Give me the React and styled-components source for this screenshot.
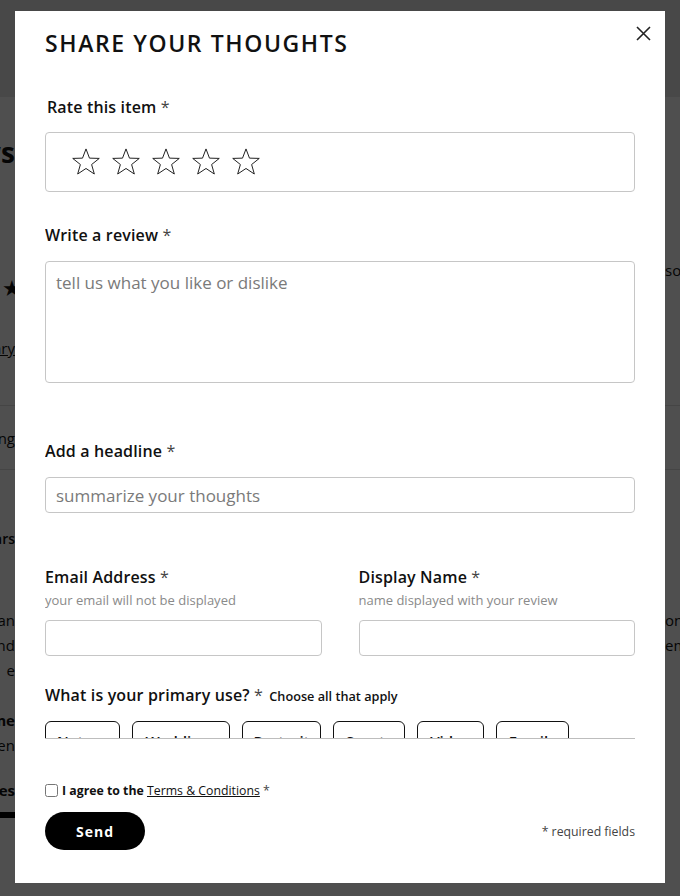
import React from 'react';
import styled, { createGlobalStyle } from 'styled-components';

const GlobalStyle = createGlobalStyle`
  * { box-sizing: border-box; }
  body {
    margin: 0;
    font-family: "Open Sans", "Liberation Sans", sans-serif;
    color: #111;
    background: #fff;
  }
`;

// Page behind the overlay
const Page = styled.div`
  width: 680px;
  height: 896px;
  overflow: hidden;
  display: flex;
  flex-direction: column;
`;

const PageHeader = styled.div`
  height: 97px;
  background: #e8e8e8;
  flex-shrink: 0;
`;

const PageRow = styled.div`
  height: ${(p) => p.$h}px;
  flex-shrink: 0;
  display: flex;
  align-items: center;
  justify-content: space-between;
  white-space: nowrap;
  border-bottom: ${(p) => (p.$line ? '1px solid #ddd' : 'none')};
  font-size: ${(p) => p.$size || 15}px;
  font-weight: ${(p) => p.$weight || 400};
`;

const LeftBit = styled.span`
  display: flex;
  justify-content: flex-end;
  width: ${(p) => p.$w || 15}px;
  line-height: 26px;
  align-self: ${(p) => p.$align || 'center'};
  text-decoration: ${(p) => (p.$underline ? 'underline' : 'none')};
`;

const RightBit = styled.span`
  margin-right: -30px;
  width: 45px;
  font-size: 15px;
  line-height: 30px;
  align-self: ${(p) => p.$align || 'center'};
`;

const Bar = styled.div`
  width: 15px;
  height: 6px;
  background: #000;
`;

// Modal
const Overlay = styled.div`
  position: fixed;
  inset: 0;
  background: rgba(0, 0, 0, 0.69);
  display: flex;
  justify-content: center;
  padding-top: 11px;
`;

const Modal = styled.div`
  position: relative;
  width: 650px;
  height: 872px;
  background: #fff;
  padding: 16px 30px 0;
  display: flex;
  flex-direction: column;
`;

const Title = styled.h2`
  margin: 0;
  font-size: 23px;
  line-height: 32px;
  font-weight: 600;
  letter-spacing: 1.6px;
  color: #111;
  flex-shrink: 0;
`;

const CloseButton = styled.button`
  position: absolute;
  top: 11px;
  right: 11px;
  width: 22px;
  height: 22px;
  padding: 0;
  border: none;
  background: none;
  display: flex;
  align-items: center;
  justify-content: center;
  cursor: pointer;
`;

const Body = styled.div`
  height: 680px;
  overflow: hidden;
  border-bottom: 1px solid #bdbdbd;
  display: flex;
  flex-direction: column;
  flex-shrink: 0;
`;

const Field = styled.div`
  margin-top: ${(p) => p.$mt}px;
  display: flex;
  flex-direction: column;
  flex-shrink: 0;
`;

const Label = styled.label`
  font-size: 16px;
  line-height: 22px;
  font-weight: 600;
  letter-spacing: 0.15px;
  color: #111;
  white-space: nowrap;
  padding-left: ${(p) => (p.$indent ? 2 : 0)}px;
`;

const Req = styled.span`
  font-weight: 400;
  color: #444;
`;

const Hint = styled.span`
  margin-top: 4px;
  font-size: 13px;
  line-height: 16px;
  color: #8a8a8a;
`;

const Aside = styled.span`
  font-size: 12.7px;
  font-weight: 600;
  letter-spacing: 0;
  color: #111;
  margin-left: 2px;
`;

const StarBox = styled.div`
  margin-top: 14px;
  height: 60px;
  border: 1px solid #c6c6c6;
  border-radius: 4px;
  display: flex;
  align-items: center;
  gap: 10px;
  padding-left: 25px;
`;

const TextArea = styled.textarea`
  margin-top: 15px;
  height: 122px;
  border: 1px solid #c6c6c6;
  border-radius: 4px;
  padding: 9px 10px;
  font-family: inherit;
  font-size: 17px;
  line-height: 24px;
  resize: none;
  outline: none;
  &::placeholder { color: #7a7a7a; }
`;

const Input = styled.input`
  margin-top: ${(p) => p.$mt || 15}px;
  height: 36px;
  border: 1px solid #c6c6c6;
  border-radius: 4px;
  padding: 0 10px;
  font-family: inherit;
  font-size: 17px;
  outline: none;
  &::placeholder { color: #7a7a7a; }
`;

const TwoCols = styled.div`
  margin-top: 53px;
  display: grid;
  grid-template-columns: 1fr 1fr;
  column-gap: 37px;
  flex-shrink: 0;
`;

const Chips = styled.div`
  margin-top: 14px;
  display: flex;
  gap: 12px;
  flex-shrink: 0;
`;

const Chip = styled.button`
  flex-shrink: 0;
  width: ${(p) => p.$w}px;
  height: 40px;
  padding: 9px 0 0;
  display: flex;
  justify-content: center;
  border: 1px solid #111;
  border-radius: 6px;
  background: #fff;
  font-family: inherit;
  font-size: 15px;
  line-height: 20px;
  font-weight: 600;
  color: #111;
`;

const Footer = styled.div`
  display: flex;
  flex-direction: column;
  padding-top: 43px;
`;

const Agree = styled.label`
  display: flex;
  align-items: center;
  gap: 4px;
  font-size: 12.3px;
  line-height: 17px;
  font-weight: 700;
  color: #111;
  input {
    margin: 0;
    width: 13px;
    height: 13px;
  }
`;

const TermsLink = styled.a`
  font-weight: 400;
  color: #111;
  text-decoration: underline;
`;

const Actions = styled.div`
  margin-top: 13px;
  display: flex;
  align-items: center;
  justify-content: space-between;
`;

const SendButton = styled.button`
  width: 100px;
  height: 38px;
  border: none;
  border-radius: 19px;
  background: #000;
  color: #fff;
  font-family: inherit;
  font-size: 14px;
  font-weight: 700;
  letter-spacing: 1px;
  cursor: pointer;
`;

const RequiredNote = styled.span`
  font-size: 12.3px;
  color: #444;
`;

const Star = () => (
  <svg width="30" height="30" viewBox="0 0 31 30" fill="none">
    <path
      d="M15.5 1.5 L19.1 11 L29.2 11.3 L21.3 17.6 L24.1 27.4 L15.5 21.7 L6.9 27.4 L9.7 17.6 L1.8 11.3 L11.9 11 Z"
      stroke="#1a1a1a"
      strokeWidth="1"
      strokeLinejoin="round"
    />
  </svg>
);

const chips = [
  ['Nature', 75],
  ['Weddings', 98],
  ['Portrait', 79],
  ['Sports', 72],
  ['Video', 67],
  ['Family', 73],
];

export default function App() {
  return (
    <>
      <GlobalStyle />
      <Page>
        <PageHeader />
        <PageRow $h={110} $size={28} $weight={700}>
          <LeftBit>Reviews</LeftBit>
        </PageRow>
        <PageRow $h={48} />
        <PageRow $h={45} $size={22}>
          <LeftBit $align="flex-end" $w={22}>★</LeftBit>
          <RightBit $align="flex-start">sort</RightBit>
        </PageRow>
        <PageRow $h={96} $size={15}>
          <LeftBit $underline>Summary</LeftBit>
        </PageRow>
        <PageRow $h={10} $line />
        <PageRow $h={64} $size={15} $line>
          <LeftBit>Rating</LeftBit>
        </PageRow>
        <PageRow $h={138} $size={14} $weight={600}>
          <LeftBit>5 stars</LeftBit>
        </PageRow>
        <PageRow $h={24} $size={15}>
          <LeftBit>Lorem an</LeftBit>
          <RightBit>on</RightBit>
        </PageRow>
        <PageRow $h={26} $size={15}>
          <LeftBit>and</LeftBit>
          <RightBit>em</RightBit>
        </PageRow>
        <PageRow $h={24} $size={15}>
          <LeftBit>e</LeftBit>
        </PageRow>
        <PageRow $h={26} />
        <PageRow $h={24} $size={15} $weight={700}>
          <LeftBit>Name</LeftBit>
        </PageRow>
        <PageRow $h={25} $size={15}>
          <LeftBit>seen</LeftBit>
        </PageRow>
        <PageRow $h={21} />
        <PageRow $h={24} $size={15} $weight={700}>
          <LeftBit>Pictures</LeftBit>
        </PageRow>
        <PageRow $h={10} />
        <PageRow $h={6}>
          <Bar />
        </PageRow>
      </Page>

      <Overlay>
        <Modal>
          <CloseButton aria-label="Close">
            <svg width="15" height="15" viewBox="0 0 15 15">
              <path d="M1 1 L14 14 M14 1 L1 14" stroke="#222" strokeWidth="1.6" />
            </svg>
          </CloseButton>
          <Title>SHARE YOUR THOUGHTS</Title>

          <Body>
            <Field $mt={37}>
              <Label $indent>
                Rate this item <Req>*</Req>
              </Label>
              <StarBox>
                {[0, 1, 2, 3, 4].map((i) => (
                  <Star key={i} />
                ))}
              </StarBox>
            </Field>

            <Field $mt={32}>
              <Label>
                Write a review <Req>*</Req>
              </Label>
              <TextArea placeholder="tell us what you like or dislike" />
            </Field>

            <Field $mt={57}>
              <Label>
                Add a headline <Req>*</Req>
              </Label>
              <Input placeholder="summarize your thoughts" />
            </Field>

            <TwoCols>
              <Field $mt={0}>
                <Label>
                  Email Address <Req>*</Req>
                </Label>
                <Hint>your email will not be displayed</Hint>
                <Input $mt={12} />
              </Field>
              <Field $mt={0}>
                <Label>
                  Display Name <Req>*</Req>
                </Label>
                <Hint>name displayed with your review</Hint>
                <Input $mt={12} />
              </Field>
            </TwoCols>

            <Field $mt={28}>
              <Label>
                What is your primary use? <Req>*</Req> <Aside>Choose all that apply</Aside>
              </Label>
              <Chips>
                {chips.map(([name, w]) => (
                  <Chip key={name} $w={w}>
                    {name}
                  </Chip>
                ))}
              </Chips>
            </Field>
          </Body>

          <Footer>
            <Agree>
              <input type="checkbox" />
              <span>
                I agree to the <TermsLink href="#">Terms &amp; Conditions</TermsLink> <Req>*</Req>
              </span>
            </Agree>
            <Actions>
              <SendButton>Send</SendButton>
              <RequiredNote>* required fields</RequiredNote>
            </Actions>
          </Footer>
        </Modal>
      </Overlay>
    </>
  );
}
